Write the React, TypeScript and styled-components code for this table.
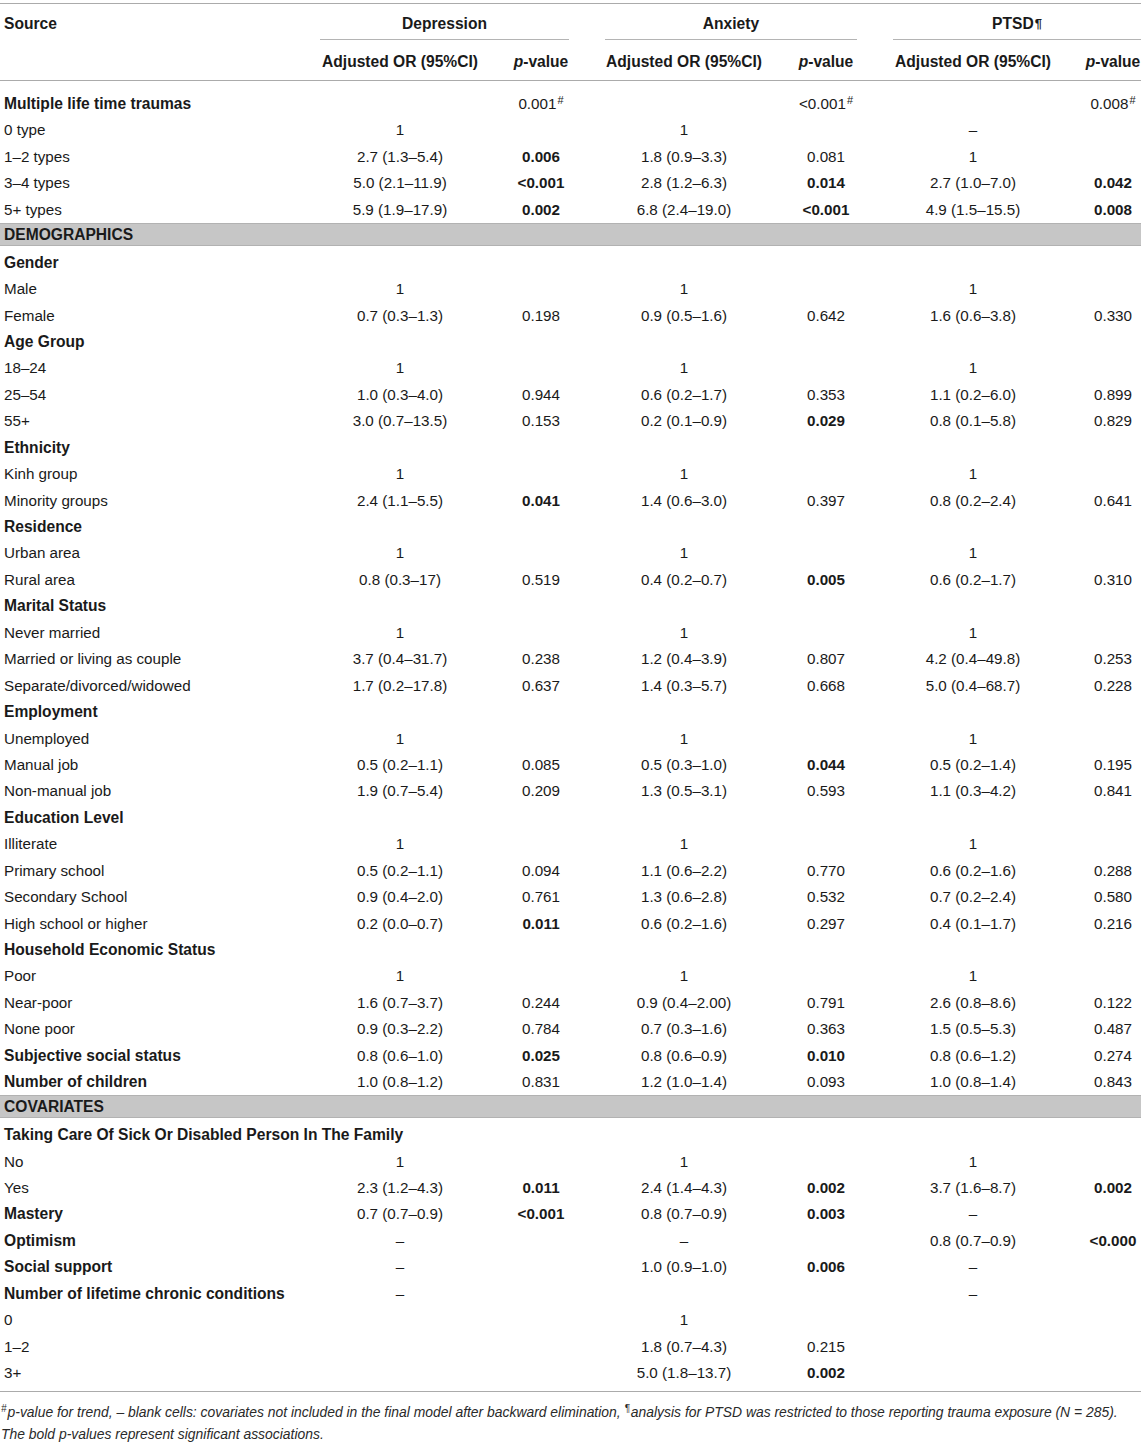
import styled, { createGlobalStyle } from "styled-components";

const GlobalStyle = createGlobalStyle`
  body {
    margin: 0;
    background: #ffffff;
  }
`;

const COLS = "320px 160px 122px 164px 120px 174px 81px";
const ROW_H = 26.44;

type RowData =
  | { kind: "section"; label: string }
  | { kind: "item"; label: string; bold?: boolean; cells?: string[] };

const rows: RowData[] = [
  { kind: "item", label: "Multiple life time traumas", bold: true, cells: ["", "0.001#", "", "<0.001#", "", "0.008#"] },
  { kind: "item", label: "0 type", cells: ["1", "", "1", "", "–", ""] },
  { kind: "item", label: "1–2 types", cells: ["2.7 (1.3–5.4)", "*0.006", "1.8 (0.9–3.3)", "0.081", "1", ""] },
  { kind: "item", label: "3–4 types", cells: ["5.0 (2.1–11.9)", "*<0.001", "2.8 (1.2–6.3)", "*0.014", "2.7 (1.0–7.0)", "*0.042"] },
  { kind: "item", label: "5+ types", cells: ["5.9 (1.9–17.9)", "*0.002", "6.8 (2.4–19.0)", "*<0.001", "4.9 (1.5–15.5)", "*0.008"] },
  { kind: "section", label: "DEMOGRAPHICS" },
  { kind: "item", label: "Gender", bold: true },
  { kind: "item", label: "Male", cells: ["1", "", "1", "", "1", ""] },
  { kind: "item", label: "Female", cells: ["0.7 (0.3–1.3)", "0.198", "0.9 (0.5–1.6)", "0.642", "1.6 (0.6–3.8)", "0.330"] },
  { kind: "item", label: "Age Group", bold: true },
  { kind: "item", label: "18–24", cells: ["1", "", "1", "", "1", ""] },
  { kind: "item", label: "25–54", cells: ["1.0 (0.3–4.0)", "0.944", "0.6 (0.2–1.7)", "0.353", "1.1 (0.2–6.0)", "0.899"] },
  { kind: "item", label: "55+", cells: ["3.0 (0.7–13.5)", "0.153", "0.2 (0.1–0.9)", "*0.029", "0.8 (0.1–5.8)", "0.829"] },
  { kind: "item", label: "Ethnicity", bold: true },
  { kind: "item", label: "Kinh group", cells: ["1", "", "1", "", "1", ""] },
  { kind: "item", label: "Minority groups", cells: ["2.4 (1.1–5.5)", "*0.041", "1.4 (0.6–3.0)", "0.397", "0.8 (0.2–2.4)", "0.641"] },
  { kind: "item", label: "Residence", bold: true },
  { kind: "item", label: "Urban area", cells: ["1", "", "1", "", "1", ""] },
  { kind: "item", label: "Rural area", cells: ["0.8 (0.3–17)", "0.519", "0.4 (0.2–0.7)", "*0.005", "0.6 (0.2–1.7)", "0.310"] },
  { kind: "item", label: "Marital Status", bold: true },
  { kind: "item", label: "Never married", cells: ["1", "", "1", "", "1", ""] },
  { kind: "item", label: "Married or living as couple", cells: ["3.7 (0.4–31.7)", "0.238", "1.2 (0.4–3.9)", "0.807", "4.2 (0.4–49.8)", "0.253"] },
  { kind: "item", label: "Separate/divorced/widowed", cells: ["1.7 (0.2–17.8)", "0.637", "1.4 (0.3–5.7)", "0.668", "5.0 (0.4–68.7)", "0.228"] },
  { kind: "item", label: "Employment", bold: true },
  { kind: "item", label: "Unemployed", cells: ["1", "", "1", "", "1", ""] },
  { kind: "item", label: "Manual job", cells: ["0.5 (0.2–1.1)", "0.085", "0.5 (0.3–1.0)", "*0.044", "0.5 (0.2–1.4)", "0.195"] },
  { kind: "item", label: "Non-manual job", cells: ["1.9 (0.7–5.4)", "0.209", "1.3 (0.5–3.1)", "0.593", "1.1 (0.3–4.2)", "0.841"] },
  { kind: "item", label: "Education Level", bold: true },
  { kind: "item", label: "Illiterate", cells: ["1", "", "1", "", "1", ""] },
  { kind: "item", label: "Primary school", cells: ["0.5 (0.2–1.1)", "0.094", "1.1 (0.6–2.2)", "0.770", "0.6 (0.2–1.6)", "0.288"] },
  { kind: "item", label: "Secondary School", cells: ["0.9 (0.4–2.0)", "0.761", "1.3 (0.6–2.8)", "0.532", "0.7 (0.2–2.4)", "0.580"] },
  { kind: "item", label: "High school or higher", cells: ["0.2 (0.0–0.7)", "*0.011", "0.6 (0.2–1.6)", "0.297", "0.4 (0.1–1.7)", "0.216"] },
  { kind: "item", label: "Household Economic Status", bold: true },
  { kind: "item", label: "Poor", cells: ["1", "", "1", "", "1", ""] },
  { kind: "item", label: "Near-poor", cells: ["1.6 (0.7–3.7)", "0.244", "0.9 (0.4–2.00)", "0.791", "2.6 (0.8–8.6)", "0.122"] },
  { kind: "item", label: "None poor", cells: ["0.9 (0.3–2.2)", "0.784", "0.7 (0.3–1.6)", "0.363", "1.5 (0.5–5.3)", "0.487"] },
  { kind: "item", label: "Subjective social status", bold: true, cells: ["0.8 (0.6–1.0)", "*0.025", "0.8 (0.6–0.9)", "*0.010", "0.8 (0.6–1.2)", "0.274"] },
  { kind: "item", label: "Number of children", bold: true, cells: ["1.0 (0.8–1.2)", "0.831", "1.2 (1.0–1.4)", "0.093", "1.0 (0.8–1.4)", "0.843"] },
  { kind: "section", label: "COVARIATES" },
  { kind: "item", label: "Taking Care Of Sick Or Disabled Person In The Family", bold: true },
  { kind: "item", label: "No", cells: ["1", "", "1", "", "1", ""] },
  { kind: "item", label: "Yes", cells: ["2.3 (1.2–4.3)", "*0.011", "2.4 (1.4–4.3)", "*0.002", "3.7 (1.6–8.7)", "*0.002"] },
  { kind: "item", label: "Mastery", bold: true, cells: ["0.7 (0.7–0.9)", "*<0.001", "0.8 (0.7–0.9)", "*0.003", "–", ""] },
  { kind: "item", label: "Optimism", bold: true, cells: ["–", "", "–", "", "0.8 (0.7–0.9)", "*<0.000"] },
  { kind: "item", label: "Social support", bold: true, cells: ["–", "", "1.0 (0.9–1.0)", "*0.006", "–", ""] },
  { kind: "item", label: "Number of lifetime chronic conditions", bold: true, cells: ["–", "", "", "", "–", ""] },
  { kind: "item", label: "0", cells: ["", "", "1", "", "", ""] },
  { kind: "item", label: "1–2", cells: ["", "", "1.8 (0.7–4.3)", "0.215", "", ""] },
  { kind: "item", label: "3+", cells: ["", "", "5.0 (1.8–13.7)", "*0.002", "", ""] },
];

const TableWrapper = styled.div`
  width: 1141px;
  padding-top: 3px;
  font-family: "Liberation Sans", Arial, Helvetica, sans-serif;
  font-size: 15.2px;
  color: #1a1a1a;
`;

const Head = styled.div`
  border-top: 1.5px solid #ababab;
  border-bottom: 1.5px solid #ababab;
`;

const HeadRow = styled.div<{ $h: number }>`
  display: grid;
  grid-template-columns: ${COLS};
  height: ${(p) => p.$h}px;
  box-sizing: border-box;
  padding-top: 4px;
  font-weight: 700;
  font-size: 15.6px;

  & > *:nth-child(7) {
    padding-left: 25px;
  }
`;

const SourceCell = styled.div`
  grid-column: 1;
  padding-left: 4px;
  display: flex;
  align-items: center;
`;

const GroupCell = styled.div<{ $ml: number; $mr: number }>`
  grid-column: span 2;
  margin: 0 ${(p) => p.$mr}px 0 ${(p) => p.$ml}px;
  border-bottom: 1.5px solid #b4b4b4;
  display: flex;
  align-items: center;
  justify-content: center;
`;

const HeadCell = styled.div`
  display: flex;
  align-items: center;
  justify-content: center;
  white-space: nowrap;

  i {
    font-weight: 700;
  }
`;

const Body = styled.div`
  padding: 8px 0 7px;
  border-bottom: 1.5px solid #ababab;
`;

const Row = styled.div`
  display: grid;
  grid-template-columns: ${COLS};
  height: ${ROW_H}px;
  box-sizing: border-box;
  padding-top: 6px;
  align-items: baseline;

  & > *:nth-child(7) {
    padding-left: 25px;
  }
`;

const Label = styled.div<{ $bold?: boolean }>`
  padding-left: 4px;
  white-space: nowrap;
  line-height: 18px;
  font-weight: ${(p) => (p.$bold ? 700 : 400)};
  font-size: ${(p) => (p.$bold ? "15.6px" : "15.2px")};
`;

const Cell = styled.div<{ $bold?: boolean }>`
  text-align: center;
  white-space: nowrap;
  line-height: 18px;
  font-weight: ${(p) => (p.$bold ? 700 : 400)};
  font-size: 15.2px;
`;

const Sup = styled.sup`
  font-size: 11px;
  line-height: 0;
  vertical-align: 0.5em;
  margin-left: 1px;
`;

const Pilcrow = styled.sup`
  font-size: 13px;
  line-height: 0;
  vertical-align: 0.45em;
  margin-left: 1px;
`;

const SectionRow = styled.div`
  height: ${ROW_H}px;
  display: flex;
  align-items: center;
`;

const SectionBand = styled.div`
  flex: 1;
  height: 23px;
  box-sizing: border-box;
  background: #c6c6c6;
  border-top: 1px solid #b2b2b2;
  border-bottom: 1px solid #b2b2b2;
  padding: 1px 0 0 4px;
  display: flex;
  align-items: center;
  font-weight: 700;
  font-size: 15.6px;
`;

const Footnote = styled.div`
  padding-top: 9px;
  padding-left: 1px;
  font-size: 13.9px;
  line-height: 22px;
  font-style: italic;
  color: #2a2a2a;
  white-space: nowrap;
`;

const NoteSup = styled.sup`
  font-size: 10px;
  line-height: 0;
  vertical-align: 0.5em;
  margin-right: 1px;
`;

function PValue({ raw }: { raw: string }) {
  if (!raw) return <Cell />;
  const bold = raw.startsWith("*");
  let text = bold ? raw.slice(1) : raw;
  const mark = text.endsWith("#");
  if (mark) text = text.slice(0, -1);
  return (
    <Cell $bold={bold}>
      {text}
      {mark && <Sup>#</Sup>}
    </Cell>
  );
}

function PHeader() {
  return (
    <HeadCell>
      <i>p</i>-value
    </HeadCell>
  );
}

export default function App() {
  return (
    <>
      <GlobalStyle />
      <TableWrapper>
        <Head>
          <HeadRow $h={36}>
            <SourceCell>Source</SourceCell>
            <GroupCell $ml={0} $mr={33}>Depression</GroupCell>
            <GroupCell $ml={3} $mr={29}>Anxiety</GroupCell>
            <GroupCell $ml={7} $mr={0}>
              PTSD<Pilcrow>¶</Pilcrow>
            </GroupCell>
          </HeadRow>
          <HeadRow $h={40}>
            <div />
            <HeadCell>Adjusted OR (95%CI)</HeadCell>
            <PHeader />
            <HeadCell>Adjusted OR (95%CI)</HeadCell>
            <PHeader />
            <HeadCell>Adjusted OR (95%CI)</HeadCell>
            <PHeader />
          </HeadRow>
        </Head>
        <Body>
          {rows.map((r, i) =>
            r.kind === "section" ? (
              <SectionRow key={i}>
                <SectionBand>{r.label}</SectionBand>
              </SectionRow>
            ) : (
              <Row key={i}>
                <Label $bold={r.bold}>{r.label}</Label>
                {(r.cells ?? ["", "", "", "", "", ""]).map((c, j) =>
                  j % 2 === 0 ? <Cell key={j}>{c}</Cell> : <PValue key={j} raw={c} />
                )}
              </Row>
            )
          )}
        </Body>
        <Footnote>
          <div>
            <NoteSup>#</NoteSup>p-value for trend, – blank cells: covariates not included in the final
            model after backward elimination, <NoteSup>¶</NoteSup>analysis for PTSD was restricted to
            those reporting trauma exposure (N = 285).
          </div>
          <div>The bold p-values represent significant associations.</div>
        </Footnote>
      </TableWrapper>
    </>
  );
}
